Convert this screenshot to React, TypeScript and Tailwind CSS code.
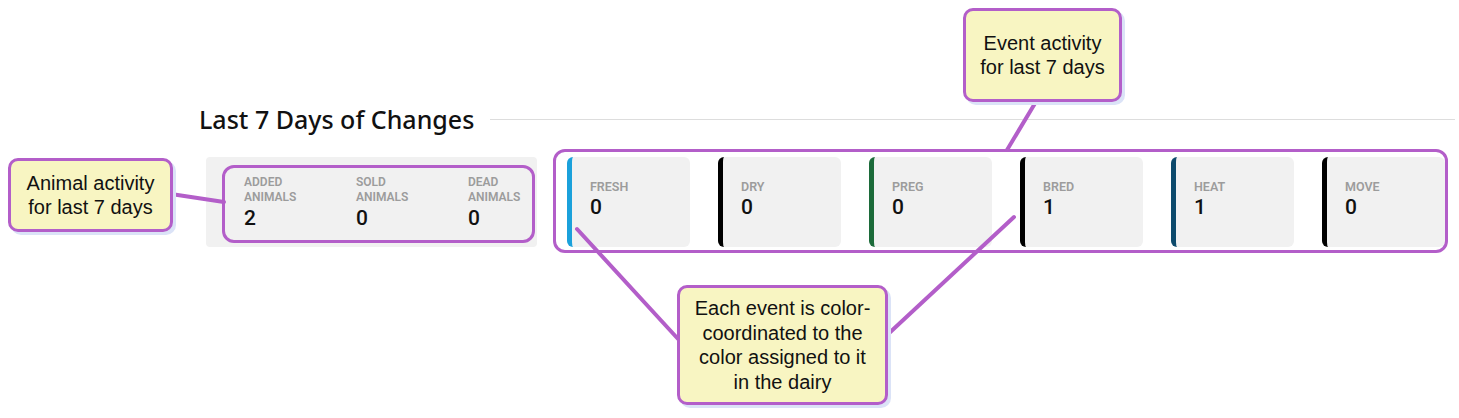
const events = [
  { label: "FRESH", value: 0, bar: "border-[#1ba1db]" },
  { label: "DRY", value: 0, bar: "border-black" },
  { label: "PREG", value: 0, bar: "border-[#1c6b3a]" },
  { label: "BRED", value: 1, bar: "border-black" },
  { label: "HEAT", value: 1, bar: "border-[#0d4a6c]" },
  { label: "MOVE", value: 0, bar: "border-black" },
];

const animals = [
  { label: "ADDED", value: 2 },
  { label: "SOLD", value: 0 },
  { label: "DEAD", value: 0 },
];

// callout bubble used for the annotations laid over the screenshot
function Callout({ className, children }: { className: string; children: React.ReactNode }) {
  return (
    <div
      className={`absolute flex items-center justify-center text-center rounded-[10px] border-[3px] border-[#b35ec9] bg-[#f8f5c2] shadow-[3px_3px_0_#dbe3f7] font-['Liberation_Sans',Arial,sans-serif] text-[20px] leading-[24.5px] text-[#111] ${className}`}
    >
      {children}
    </div>
  );
}

export default function App() {
  return (
    <div className="relative w-[1459px] h-[418px] bg-white overflow-hidden">
      <div className="pt-[102px] pl-[199px] pr-[4px] font-['Roboto',sans-serif]">
        <div className="flex items-center">
          <h2 className="font-['Noto_Sans',sans-serif] text-[25px] leading-[34px] font-medium text-[#111]">
            Last 7 Days of Changes
          </h2>
          <div className="flex-1 h-px bg-[#dddddd] ml-[16px]" />
        </div>

        <div className="flex mt-[21px] ml-[7px] gap-[30px]">
          <div className="w-[331px] h-[90px] bg-[#f1f1f1] rounded-[4px] pl-[38px] pt-[18px] grid grid-cols-[112px_112px_112px]">
            {animals.map((a) => (
              <div key={a.label}>
                <div className="text-[12px] leading-[15px] font-semibold text-[#9c9c9c]">
                  {a.label}
                  <br />
                  ANIMALS
                </div>
                <div className="text-[21px] leading-[26px] font-medium text-[#111]">{a.value}</div>
              </div>
            ))}
          </div>

          <div className="flex gap-[28px]">
            {events.map((e) => (
              <div
                key={e.label}
                className={`w-[123px] h-[90px] bg-[#f1f1f1] rounded-[6px] border-l-[5px] ${e.bar} pl-[18px] pt-[22px]`}
              >
                <div className="text-[12.5px] leading-[15px] font-semibold text-[#9c9c9c]">{e.label}</div>
                <div className="text-[21px] leading-[26px] font-medium text-[#111]">{e.value}</div>
              </div>
            ))}
          </div>
        </div>
      </div>

      {/* annotation layer */}
      <div className="absolute left-[222px] top-[165px] w-[313px] h-[78px] rounded-[12px] border-[3.5px] border-[#b35ec9]" />
      <div className="absolute left-[553px] top-[149px] w-[895px] h-[104px] rounded-[12px] border-[3.5px] border-[#b35ec9]" />

      <svg className="absolute inset-0 pointer-events-none" width="1459" height="418">
        <g stroke="#b35ec9" strokeWidth="4" strokeLinecap="round">
          <line x1="171" y1="194" x2="224" y2="202" />
          <line x1="1037" y1="100" x2="1007" y2="150" />
          <line x1="577" y1="229" x2="679" y2="340" />
          <line x1="1014" y1="217" x2="886" y2="336" />
        </g>
      </svg>

      <Callout className="left-[8px] top-[158px] w-[165px] h-[74px]">
        Animal activity
        <br />
        for last 7 days
      </Callout>
      <Callout className="left-[963px] top-[8px] w-[159px] h-[94px]">
        Event activity
        <br />
        for last 7 days
      </Callout>
      <Callout className="left-[677px] top-[285px] w-[211px] h-[120px]">
        Each event is color-
        <br />
        coordinated to the
        <br />
        color assigned to it
        <br />
        in the dairy
      </Callout>
    </div>
  );
}
